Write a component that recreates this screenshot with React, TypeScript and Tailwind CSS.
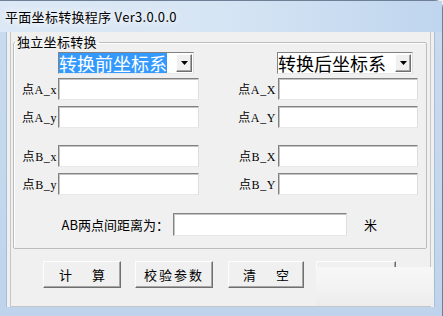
import type { ReactNode } from "react";

const sunken =
  "bg-white border border-t-[#828282] border-l-[#828282] border-r-[#dedede] border-b-[#e8e8e8] shadow-[inset_1px_1px_0_#c4c4c4]";
const raised =
  "bg-[#f0f0f0] border border-t-[#fdfdfd] border-l-[#fdfdfd] border-r-[#6f6f6f] border-b-[#6f6f6f] shadow-[inset_-1px_-1px_0_#a6a6a6]";

function Field({ className }: { className: string }) {
  return <div className={`${sunken} ${className}`} />;
}

function Label({ className, children }: { className: string; children: ReactNode }) {
  return (
    <span
      className={`text-right font-['Liberation_Serif','Noto_Sans_CJK_SC',serif] text-[12px] tracking-[0.6px] text-black pt-[2px] ${className}`}
    >
      {children}
    </span>
  );
}

function Combo({ text, selected }: { text: string; selected?: boolean }) {
  return (
    <div className={`flex h-[22px] w-[136px] items-stretch ${sunken} shadow-none`}>
      <div className="flex flex-1 items-stretch">
        <span
          className={`flex items-center text-[18px] leading-none ${
            selected ? "bg-[#3399ff] text-white" : "text-black"
          }`}
        >
          {text}
        </span>
      </div>
      <div className={`m-px flex w-[16px] items-center justify-center ${raised}`}>
        <svg width="7" height="4" viewBox="0 0 7 4">
          <path d="M0 0h7L3.5 4z" fill="#000" />
        </svg>
      </div>
    </div>
  );
}

function Btn({ className, children }: { className: string; children: ReactNode }) {
  return (
    <div
      className={`flex h-[27px] items-center justify-center text-[13px] text-black ${raised} ${className}`}
    >
      {children}
    </div>
  );
}

function PointRow({ left, right, className }: { left: string; right: string; className: string }) {
  return (
    <div className={`flex h-[22px] items-center ${className}`}>
      <Label className="w-[44px] pr-[1px]">{left}</Label>
      <Field className="h-[22px] w-[141px]" />
      <Label className="w-[79px] pr-[2px]">{right}</Label>
      <Field className="h-[22px] w-[140px]" />
    </div>
  );
}

export default function App() {
  return (
    <div className="relative h-[316px] w-[443px] overflow-hidden bg-[#f0f0f0] font-['Noto_Sans_CJK_SC',sans-serif]">
      <div className="flex h-full flex-col rounded-tr-[8px] border-r border-t border-[#6f8096] bg-gradient-to-b from-[#c9dbef] to-[#bfd4ec]">
        <div className="flex h-[31px] items-center bg-gradient-to-r from-[#dce8f5] via-[#d6e5f4] to-[#bfd5ee] pl-[5px]">
          <span className="text-[13px] tracking-[0.3px] text-black [text-shadow:0_0_6px_#ffffff,0_0_10px_#ffffff]">
            平面坐标转换程序 Ver3.0.0.0
          </span>
        </div>

        <div className="flex flex-1">
          <div className="w-[7px] border-r border-[#a9bdd4]" />
          <div className="flex w-[427px] flex-col bg-[#f0f0f0] px-[3px]">
            <div className="flex flex-1 flex-col border-b border-l border-r border-[#c6c6c6]">
              <fieldset className="ml-[2px] mt-[1px] w-[414px] rounded-[2px] border border-[#bcbcbc] pb-[12px] shadow-[inset_1px_1px_0_#ffffff]">
                <legend className="ml-[1px] h-[18px] px-[2px] text-[13px] tracking-[0.3px] leading-[18px] text-black">
                  独立坐标转换
                </legend>

                <div className="mt-[1px] flex pl-[44px]">
                  <Combo text="转换前坐标系" selected />
                  <div className="ml-[83px]">
                    <Combo text="转换后坐标系" />
                  </div>
                </div>

                <PointRow left="点A_x" right="点A_X" className="mt-[4px]" />
                <PointRow left="点A_y" right="点A_Y" className="mt-[6px]" />
                <PointRow left="点B_x" right="点B_X" className="mt-[17px]" />
                <PointRow left="点B_y" right="点B_Y" className="mt-[6px]" />

                <div className="mt-[18px] flex h-[23px] items-center">
                  <span className="w-[159px] pr-[4px] text-right text-[13px] text-black">
                    AB两点间距离为：
                  </span>
                  <Field className="h-[23px] w-[174px]" />
                  <span className="ml-[17px] text-[13px] text-black">米</span>
                </div>
              </fieldset>

              <div className="mt-[12px] flex">
                <Btn className="ml-[32px] w-[78px] gap-[20px]">
                  <span>计</span>
                  <span>算</span>
                </Btn>
                <Btn className="ml-[14px] w-[78px] tracking-[2px]">校验参数</Btn>
                <Btn className="ml-[15px] w-[76px] gap-[20px]">
                  <span>清</span>
                  <span>空</span>
                </Btn>
                <Btn className="ml-[12px] w-[80px] gap-[20px]">
                  <span>退</span>
                  <span>出</span>
                </Btn>
              </div>
            </div>
          </div>
          <div className="w-[8px] border-l border-[#a9bdd4]" />
        </div>
        <div className="h-[9px]" />
      </div>

      <div className="absolute left-[316px] top-[267px] h-[39px] w-[117px] bg-gradient-to-b from-[#f7f7f7] via-[#f3f3f3] to-[#ececec]" />
    </div>
  );
}
